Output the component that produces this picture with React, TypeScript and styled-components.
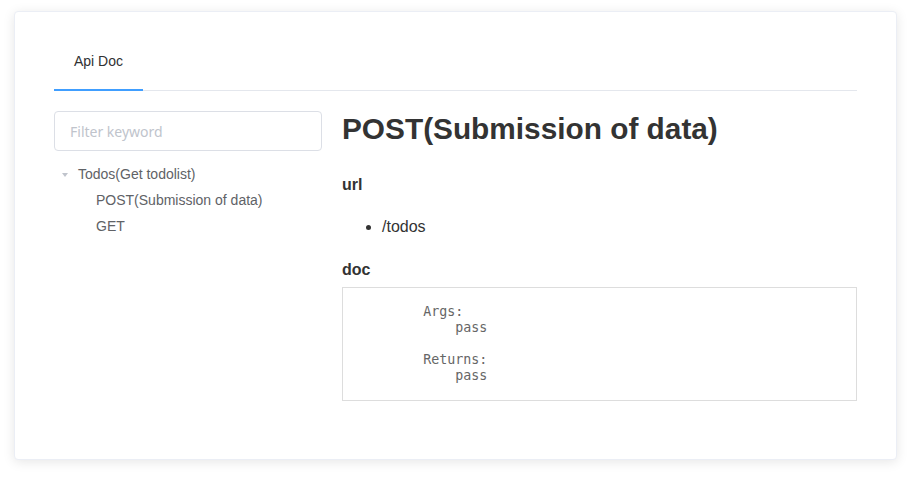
import { createGlobalStyle, styled } from "styled-components";

const GlobalStyle = createGlobalStyle`
  html, body {
    margin: 0;
    padding: 0;
    background: #fff;
  }
  body {
    font-family: "Liberation Sans", Arial, Helvetica, sans-serif;
    -webkit-font-smoothing: antialiased;
  }
  * {
    box-sizing: border-box;
  }
`;

const Page = styled.div`
  padding: 11px 14px 18px;
`;

const Card = styled.div`
  background: #fff;
  border: 1px solid #ebeef5;
  border-radius: 4px;
  box-shadow: 0 2px 12px 0 rgba(0, 0, 0, 0.1);
  padding: 21px 39px 39px;
`;

const TabNav = styled.div`
  display: flex;
  height: 58px;
  border-bottom: 1px solid #e4e7ed;
`;

const TabItem = styled.div<{ $active?: boolean }>`
  position: relative;
  padding: 8px 20px 0;
  height: 57px;
  line-height: 40px;
  font-size: 14px;
  color: #303133;
  &::after {
    content: "";
    display: ${props => (props.$active ? "block" : "none")};
    position: absolute;
    left: 0;
    right: 0;
    bottom: -1px;
    height: 2px;
    background: #409eff;
  }
`;

const Body = styled.div`
  display: flex;
  margin-top: 20px;
`;

const Side = styled.div`
  width: 268px;
  flex-shrink: 0;
`;

const Filter = styled.input`
  display: block;
  width: 100%;
  height: 40px;
  border: 1px solid #dcdfe6;
  border-radius: 4px;
  padding: 0 15px;
  font-family: "Noto Sans", "Open Sans", sans-serif;
  font-size: 14px;
  color: #606266;
  outline: none;
  &::placeholder {
    color: #c0c4cc;
  }
`;

const Tree = styled.ul`
  list-style: none;
  margin: 10px 0 0;
  padding: 0;
`;

const TreeRow = styled.li<{ $level: number }>`
  display: flex;
  align-items: center;
  height: 26px;
  padding-left: ${props => props.$level * 18}px;
  font-size: 14px;
  color: #606266;
`;

const Caret = styled.span<{ $leaf?: boolean }>`
  display: flex;
  align-items: center;
  justify-content: center;
  width: 24px;
  height: 26px;
  &::before {
    content: "";
    display: ${props => (props.$leaf ? "none" : "block")};
    width: 0;
    height: 0;
    border-left: 3.5px solid transparent;
    border-right: 3.5px solid transparent;
    border-top: 4px solid #c0c4cc;
    margin-left: -2px;
    margin-top: 2px;
  }
`;

const Main = styled.div`
  flex: 1;
  min-width: 0;
  padding-left: 20px;
  color: #333;
`;

const Title = styled.h1`
  margin: 0;
  font-size: 29.8px;
  line-height: 36px;
  font-weight: bold;
  color: #333;
`;

const Section = styled.h4<{ $gap: number }>`
  margin: ${props => props.$gap}px 0 0;
  font-size: 16px;
  line-height: 20px;
  font-weight: bold;
  color: #333;
`;

const UrlList = styled.ul`
  margin: 22px 0 0;
  padding-left: 40px;
  li {
    font-size: 16px;
    line-height: 20px;
    color: #333;
  }
`;

const DocBox = styled.pre`
  margin: 7px 0 19px;
  padding: 16px;
  border: 1px solid #ddd;
  font-family: "DejaVu Sans Mono", "Liberation Mono", monospace;
  font-size: 13.33px;
  line-height: 16px;
  color: #666;
  white-space: pre;
`;

const docText = `        Args:
            pass

        Returns:
            pass`;

function App() {
  return (
    <>
      <GlobalStyle />
      <Page>
        <Card>
          <TabNav>
            <TabItem $active>Api Doc</TabItem>
          </TabNav>
          <Body>
            <Side>
              <Filter placeholder="Filter keyword" />
              <Tree>
                <TreeRow $level={0}>
                  <Caret />
                  Todos(Get todolist)
                </TreeRow>
                <TreeRow $level={1}>
                  <Caret $leaf />
                  POST(Submission of data)
                </TreeRow>
                <TreeRow $level={1}>
                  <Caret $leaf />
                  GET
                </TreeRow>
              </Tree>
            </Side>
            <Main>
              <Title>POST(Submission of data)</Title>
              <Section $gap={28}>url</Section>
              <UrlList>
                <li>/todos</li>
              </UrlList>
              <Section $gap={23}>doc</Section>
              <DocBox>{docText}</DocBox>
            </Main>
          </Body>
        </Card>
      </Page>
    </>
  );
}

export default App;
